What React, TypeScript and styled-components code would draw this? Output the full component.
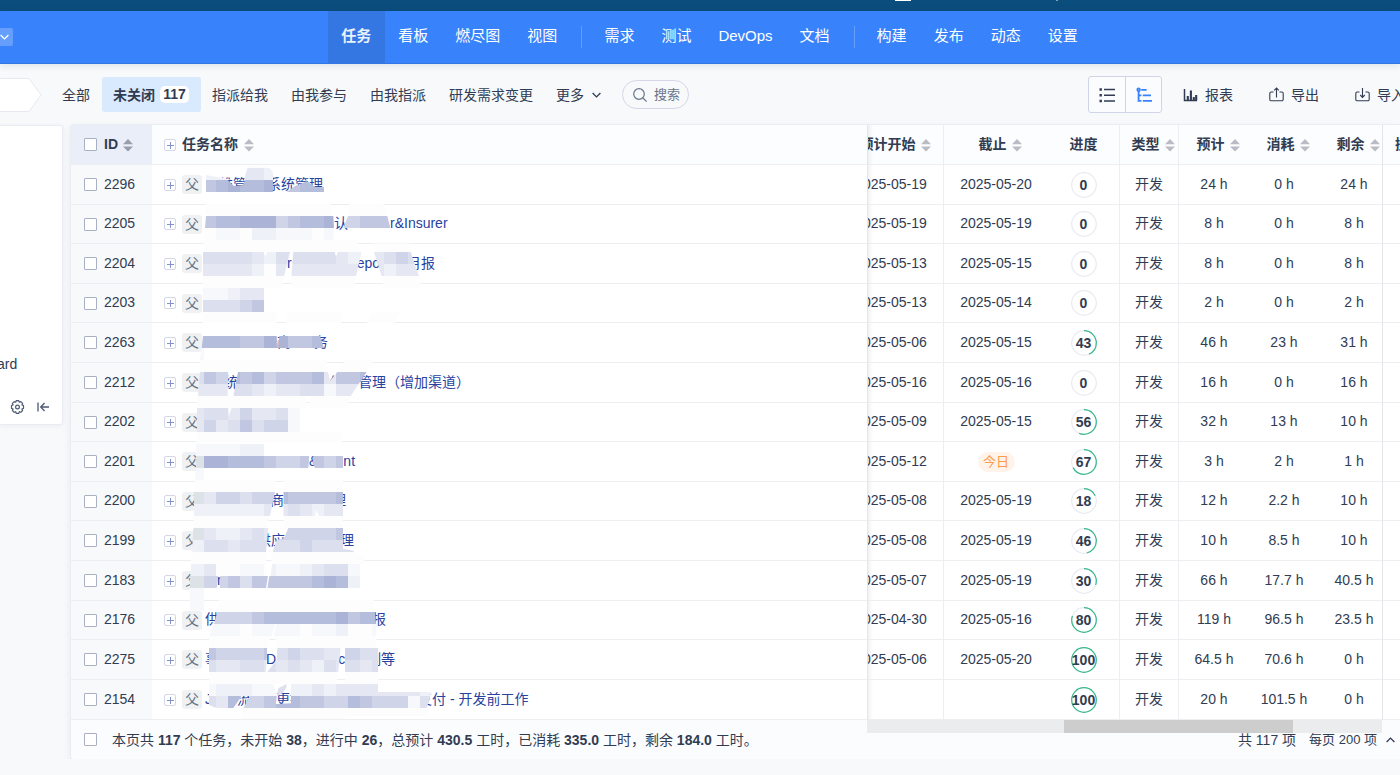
import React from "react";
import styled, { createGlobalStyle, css } from "styled-components";

const GlobalStyle = createGlobalStyle`
  *, *::before, *::after { box-sizing: border-box; }
  body {
    margin: 0;
    background: #f7f9fb;
    color: #313c52;
    font: 14px/20px "Liberation Sans", "Noto Sans CJK SC", sans-serif;
    overflow: hidden;
  }
  button, input { font: inherit; color: inherit; }
  a { color: inherit; text-decoration: none; }
`;

/* ---------- top bars ---------- */

const BrowserStrip = styled.div`
  display: flex;
  justify-content: flex-end;
  gap: 145px;
  height: 11px;
  padding-right: 342px;
  background: #0b4d7c;
`;

const StripMark = styled.i<{ $wide?: boolean }>`
  width: ${(p) => (p.$wide ? 16 : 2)}px;
  height: 1px;
  background: ${(p) => (p.$wide ? "#ffffff" : "#7f9fb6")};
`;

const Header = styled.header`
  display: flex;
  align-items: center;
  height: 53px;
  background: #3883fb;
  border-bottom: 1px solid #3277e4;
  box-shadow: 0 1px 8px rgba(20, 40, 80, 0.12);
  position: relative;
`;

const SwitchButton = styled.button`
  display: flex;
  align-items: center;
  width: 13px;
  height: 18px;
  margin-right: 7px;
  padding: 0;
  border: 0;
  border-radius: 0 2px 2px 0;
  background: #659ffb;
  color: #fff;
`;

const Nav = styled.nav`
  flex: 1;
  display: flex;
  justify-content: center;
  align-self: stretch;
`;

const NavLink = styled.a<{ $active?: boolean }>`
  display: flex;
  align-items: center;
  padding: 0 14px 2px 13px;
  font-size: 15px;
  color: #fff;
  white-space: nowrap;
  ${(p) => p.$active && css`background: #3477e3; font-weight: 700; color: #e9f1fd;`}
`;

const NavDivider = styled.span`
  align-self: center;
  width: 1px;
  height: 22px;
  margin: 0 9px 0 10px;
  background: #659ffb;
`;

/* ---------- toolbar ---------- */

const Toolbar = styled.div`
  display: flex;
  align-items: center;
  height: 61px;
  overflow: hidden;
`;

const Filters = styled.div`
  display: flex;
  align-items: center;
  margin-left: 9px;
`;

const FilterButton = styled.button<{ $active?: boolean; $menu?: boolean }>`
  display: flex;
  align-items: center;
  gap: ${(p) => (p.$menu ? 8 : 5)}px;
  height: 35px;
  padding: 0 12px 0 11px;
  border: 0;
  border-radius: 3px;
  background: ${(p) => (p.$active ? "#d9e9fe" : "transparent")};
  font-weight: ${(p) => (p.$active ? 700 : 400)};
  white-space: nowrap;
`;

const Count = styled.span`
  width: 29px;
  border-radius: 5px;
  background: #fff;
  line-height: 17px;
  text-align: center;
`;

const SearchButton = styled.button`
  display: flex;
  align-items: center;
  gap: 7px;
  height: 29px;
  margin-left: 9px;
  padding: 0 8px 0 10px;
  border: 1px solid #d5d6e8;
  border-radius: 15px;
  background: transparent;
  color: #69758c;
  font-size: 13px;
  white-space: nowrap;
`;

const Actions = styled.div`
  display: flex;
  align-items: center;
  gap: 9px;
  margin: 0 -17px 0 auto;
`;

const ActionList = styled.div`
  display: flex;
  gap: 12px;
`;

const ViewToggle = styled.div`
  display: flex;
  border: 1px solid #d0d4e8;
  border-radius: 3px;
  background: #fbfcfe;
`;

const ToggleButton = styled.button<{ $active?: boolean }>`
  display: grid;
  place-items: center;
  width: 36px;
  height: 35px;
  padding: 0;
  border: 0;
  background: transparent;
  color: ${(p) => (p.$active ? "#3883fb" : "#313c52")};
  & + & { border-left: 1px solid #d0d4e8; }
`;

const ActionButton = styled.button`
  display: flex;
  align-items: center;
  gap: 7px;
  height: 35px;
  padding: 0 12px;
  border: 0;
  background: transparent;
  white-space: nowrap;
`;

/* ---------- body ---------- */

const Content = styled.main`
  display: flex;
  align-items: flex-start;
  gap: 8px;
`;

const SidePanel = styled.aside`
  display: flex;
  flex-direction: column;
  justify-content: flex-end;
  width: 63px;
  height: 300px;
  border: 1px solid #e9ecf1;
  border-left: 0;
  border-radius: 0 3px 3px 0;
  background: #fff;
  box-shadow: 0 1px 5px rgba(30, 50, 80, 0.06);
`;

const SideLink = styled.a`
  margin-bottom: 26px;
  margin-left: -3px;
`;

const SideTools = styled.div`
  display: flex;
  gap: 12px;
  padding: 0 10px 10px;
`;

const IconButton = styled.button`
  display: grid;
  padding: 0;
  border: 0;
  background: transparent;
  color: #4c5a73;
`;

const Panel = styled.section`
  flex: 1;
  min-width: 0;
  position: relative;
  box-shadow: 0 0 0 1px #eaedf1, 0 3px 10px rgba(30, 50, 80, 0.08);
  border-radius: 3px 0 0 3px;
`;

const TaskTable = styled.table`
  width: 100%;
  table-layout: fixed;
  border-spacing: 0;
`;

const HeadRow = styled.tr`
  height: 40px;
`;

const BodyRow = styled.tr`
  height: 40px;
  &:nth-child(5n + 2), &:nth-child(5n + 4) { height: 39px; }
  &:last-child { height: 40px; }
`;

type CellKind = "id" | "name" | "start" | "line" | "plain" | "pinned";

const cellStyle = css<{ $kind: CellKind }>`
  padding: 0;
  border-bottom: 1px solid #eceef1;
  white-space: nowrap;
  vertical-align: middle;
  ${(p) => p.$kind !== "name" && css`overflow: hidden;`}
  ${(p) => p.$kind === "name" && css`position: relative; border-right: 1px solid #e3e5e9;`}
  ${(p) => (p.$kind === "start" || p.$kind === "line") && css`border-right: 1px solid #eceef1;`}
  ${(p) => p.$kind === "pinned" && css`border-left: 1px solid #e3e5e9;`}
`;

const Th = styled.th<{ $kind: CellKind }>`
  ${cellStyle}
  background: ${(p) => (p.$kind === "id" ? "#e9eef8" : "#fcfdfe")};
  font-weight: 700;
  text-align: left;
  ${(p) => p.$kind === "start" && css`background: linear-gradient(to right, #eff0f2, #fcfdfe 5px);`}
`;

const Td = styled.td<{ $kind: CellKind }>`
  ${cellStyle}
  background: ${(p) => (p.$kind === "id" ? "#f7f9fb" : "#ffffff")};
  ${(p) => p.$kind === "start" && css`background: linear-gradient(to right, #f2f2f4, #fff 5px);`}
`;

/* text sits one pixel above the boxes and icons beside it */
const CellText = styled.span`
  padding-bottom: 2px;
`;

const LeftCell = styled.div<{ $gap: number; $pad: number }>`
  display: flex;
  align-items: center;
  gap: ${(p) => p.$gap}px;
  padding-left: ${(p) => p.$pad}px;
`;

const FromRight = styled.div`
  display: flex;
  justify-content: flex-end;
`;

const CenterCell = styled.div<{ $width?: number; $sort?: boolean }>`
  display: flex;
  flex: none;
  align-items: center;
  justify-content: center;
  gap: 5px;
  ${(p) => p.$width && css`width: ${p.$width}px;`}
  padding-left: ${(p) => (p.$sort ? 8 : 0)}px;
`;

const Tick = styled.input.attrs({ type: "checkbox" })`
  appearance: none;
  flex: none;
  width: 13px;
  height: 13px;
  margin: 0;
  border: 1px solid #a9b0c2;
  border-radius: 1px;
  background: #fff;
`;

const TickLabel = styled.label`
  display: flex;
  align-items: center;
  gap: 7px;
`;

const ExpandButton = styled.button`
  display: grid;
  place-items: center;
  width: 12px;
  height: 12px;
  padding: 0;
  border: 1px solid #d4d8e6;
  border-radius: 2px;
  background: #fff;
  color: #8392cb;
`;

const ParentBadge = styled.span`
  width: 20px;
  border-radius: 3px;
  background: #eff1f2;
  color: #64758b;
  line-height: 19px;
  text-align: center;
`;

const TaskLink = styled.a`
  display: flex;
  margin-left: -3px;
  padding-bottom: 2px;
  color: #2842a0;
  white-space: pre;
`;

const Gap = styled.span<{ $width: number }>`
  width: ${(p) => p.$width}px;
`;

const Ring = styled.div`
  display: grid;
  place-items: center;
  height: 26px;
  font-weight: 700;
  & > * { grid-area: 1 / 1; }
`;

const Today = styled.span`
  width: 37px;
  border-radius: 10px;
  background: #fff3ea;
  color: #ff9a4a;
  font-size: 13px;
  text-align: center;
`;

const MosaicSvg = styled.svg`
  position: absolute;
  top: 0;
  left: 0;
  z-index: 1;
  pointer-events: none;
`;

const PanelFooter = styled.footer`
  display: flex;
  align-items: center;
  height: 39px;
  padding: 0 5px 0 13px;
  border-radius: 0 0 0 3px;
  background: #fbfcfe;
  white-space: nowrap;
`;

const Summary = styled.label`
  display: flex;
  align-items: center;
  gap: 15px;
`;

const Pager = styled.div`
  display: flex;
  align-items: center;
  gap: 13px;
  margin-left: auto;
`;

const PageSize = styled.button`
  display: flex;
  align-items: center;
  gap: 9px;
  padding: 0;
  border: 0;
  background: transparent;
  font-size: 13px;
`;

const ScrollTrack = styled.div`
  position: absolute;
  right: 18px;
  bottom: 26px;
  width: 515px;
  height: 13px;
  padding-left: 197px;
  background: #ebecee;
`;

const ScrollThumb = styled.div`
  width: 229px;
  height: 13px;
  background: #cdcdcd;
`;

/* ---------- icons ---------- */

const Chevron = ({ up }: { up?: boolean }) => (
  <svg width="9" height="6" viewBox="0 0 9 6" fill="none" stroke="currentColor" strokeWidth="1.3">
    <path d={up ? "M.6 5 4.5 1.1 8.4 5" : "M.6 1 4.5 4.9 8.4 1"} />
  </svg>
);

const Plus = () => (
  <svg width="8" height="8" viewBox="0 0 8 8" stroke="currentColor" strokeWidth="1">
    <path d="M1 4.5h7M4.5 1v7" />
  </svg>
);

const Sort = ({ dark }: { dark?: boolean }) => (
  <svg width="10" height="14" viewBox="0 0 10 14" fill={dark ? "#989dac" : "#b9bcc4"}>
    <path d="M5 1 10 6.2H0zM5 13.6 0 8.4h10z" />
  </svg>
);

const BreadcrumbEnd = () => (
  <svg width="42" height="34" viewBox="0 0 42 34" fill="#fff" stroke="#e6e9ef">
    <path d="M-1 .5H29L41 17 29 33.5H-1z" />
  </svg>
);

const SearchIcon = () => (
  <svg width="14" height="14" viewBox="0 0 14 14" fill="none" stroke="currentColor" strokeWidth="1.2">
    <circle cx="6" cy="6" r="5.3" />
    <path d="m10 10 3.6 3.6" />
  </svg>
);

const ListIcon = () => (
  <svg width="16" height="16" viewBox="0 0 16 16" stroke="currentColor" strokeWidth="1.5">
    <path d="M5 2.5h11M5 8.2h11M5 14h11" />
    <path d="M.5 2.5h2.4M.5 8.2h2.4M.5 14h2.4" strokeWidth="2.4" />
  </svg>
);

const TreeIcon = () => (
  <svg width="16" height="16" viewBox="0 0 16 16" fill="none" stroke="currentColor" strokeWidth="1.8">
    <circle cx="2.6" cy="2.8" r="1.3" />
    <path d="M5.2 2.8h5.4M2.6 4v9.8h2.8M2.6 8.4h2.8M6.8 8.4H15M6.8 13.8H16" />
  </svg>
);

const ChartIcon = () => (
  <svg width="15" height="14" viewBox="0 0 15 14" stroke="currentColor" fill="none">
    <path d="M1.5 1v11.5H14" strokeWidth="1.5" />
    <path d="M4.8 12.5V8M7.9 12.5V2.6M10.8 12.5V9M13.2 12.5V7" strokeWidth="2.1" />
  </svg>
);

const TransferIcon = ({ into }: { into?: boolean }) => (
  <svg width="15" height="15" viewBox="0 0 15 15" fill="none" stroke="currentColor" strokeWidth="1.1">
    <path d="M4.5 5H2.2A1.4 1.4 0 0 0 .8 6.4v6a1.4 1.4 0 0 0 1.4 1.4h10.6a1.4 1.4 0 0 0 1.4-1.4v-6A1.4 1.4 0 0 0 12.8 5h-2.3" />
    <path d={into ? "M7.5 1v9.4M5.2 8l2.3 2.4L9.8 8" : "M7.5 10.4V1M5.2 3.4 7.5 1l2.3 2.4"} />
  </svg>
);

const GearIcon = () => (
  <svg width="15" height="14" viewBox="0 0 15 14" fill="none" stroke="currentColor" strokeWidth="1.2" strokeLinejoin="round">
    <path d="M6.2.7h2.6l.5 1.5 1.5-.6 1.8 1.8-.7 1.5 1.6.6v2.9l-1.6.6.7 1.5-1.8 1.8-1.5-.6-.5 1.6H6.2l-.5-1.6-1.5.6-1.8-1.8.7-1.5L1.500 8.400V5.500l1.600-.6-.7-1.500 1.800-1.800 1.500.6z" />
    <circle cx="7.5" cy="7" r="1.9" />
  </svg>
);

const CollapseIcon = () => (
  <svg width="13" height="14" viewBox="0 0 13 14" fill="none" stroke="currentColor" strokeWidth="1.3">
    <path d="M1 2.500v9M12 7H4M7.6 3 3.7 7l3.9 4" />
  </svg>
);

const Progress = ({ value }: { value: number }) => {
  const length = 2 * Math.PI * 12.3;
  return (
    <Ring>
      <svg width="26" height="26" viewBox="0 0 26 26" fill="none" strokeWidth="1.2">
        <circle cx="13" cy="13" r="12.3" stroke="#e9eaf2" />
        {value > 0 && (
          <circle
            cx="13"
            cy="13"
            r="12.3"
            stroke="#35b98a"
            strokeDasharray={`${(length * value) / 100} ${length}`}
            transform="rotate(-90 13 13)"
          />
        )}
      </svg>
      <span>{value}</span>
    </Ring>
  );
};

/* ---------- mosaic laid over the private parts of the task names ---------- */

const TONES: Record<string, string> = {
  a: "#abb4d7",
  b: "#b5bddc",
  c: "#c1c6e1",
  d: "#cfd4e8",
  e: "#dcdfed",
  f: "#e5e8f3",
  g: "#eff1f8",
  h: "#f7f8fc",
  w: "#fdfdfd",
  k: "#dde2e6",
};

/* outline, then strips of 36-unit cells: [top, left, tones] */
type Blob = [string, ...[number, number, string][]];

const MOSAIC: { top: number; blobs: Blob[] }[] = [
  {
    top: 480,
    blobs: [
      ["438,60 504,60 522,78 548,76 556,60 639,60 639,96 438,96", [60, 432, "cbabba"]],
      ["552,60 562,24 628,24 639,36 639,60", [24, 540, "ffg"]],
      ["562,24 580,8 615,8 628,24", [-12, 540, "www"]],
      ["438,45 520,60 438,60", [24, 432, "ggg"]],
      ["680,96 705,78 740,64 765,80 792,82 792,96", [60, 648, "ccbbb"]],
      ["438,132 810,132 820,168 438,168", [132, 432, "wwwwwwwwwww"]],
      ["870,132 970,132 982,168 860,168", [132, 828, "wwwww"]],
      ["438,168 820,168 822,204 820,240 432,240", [168, 432, "cbbaaadcbba"], [204, 432, "whhwgghhhwh"]],
      ["850,204 864,168 982,168 991,204", [168, 828, "ddccc"]],
      ["432,240 890,240 905,276 432,276", [240, 432, "wwwwwwwwwwwwww"]],
      ["940,250 1048,250 1055,276 945,276", [240, 936, "wwww"]],
      ["429,276 612,276 615,290 622,276 690,276 672,348 429,348", [276, 396, "eeeeefgee"], [312, 396, "fffffgwff"]],
      ["700,276 824,276 828,290 834,276 905,276 888,348 694,348", [276, 684, "eeeefgg"], [312, 684, "fffffff"]],
      ["942,276 1052,276 1077,348 965,348", [276, 936, "fede"], [312, 936, "fgff"]],
      ["429,348 675,348 665,384 429,384", [348, 396, "wwwwwwww"]],
      ["694,348 885,348 880,384 694,384", [348, 684, "wwwwww"]],
      ["968,348 1080,348 1082,384 970,384", [348, 936, "wwwww"]],
      ["429,384 612,384 612,456 429,456", [384, 396, "hhhgff"], [420, 396, "eeeedc"]],
      ["429,456 650,456 650,490 429,490", [456, 396, "wwwwwwww"]],
      ["685,456 850,456 843,490 675,490", [456, 648, "wwwwwww"]],
      ["935,456 1020,456 1005,490 920,490", [456, 900, "wwww"]],
      ["429,528 650,528 655,564 425,564", [528, 396, "bbbbccab"]],
      ["655,564 658,528 780,528 792,564", [528, 648, "accbb"]],
      ["424,564 432,564 432,600 420,600", [564, 396, "hh"]],
    ],
  },
  {
    top: 1080,
    blobs: [
      ["420,0 800,0 804,36 420,36", [0, 396, "wwwwwwwwwwww"]],
      ["858,0 940,0 920,36 832,36", [0, 828, "wwww"]],
      ["420,36 505,36 503,108 414,108", [36, 396, "ecdd"], [72, 396, "ffff"]],
      ["534,36 804,36 810,62 832,36 920,36 872,108 520,108", [36, 504, "bcbdcccbfccb"], [72, 504, "eefgffeehff"]],
      ["411,108 516,108 506,144 411,144", [108, 396, "wwww"]],
      ["518,108 740,108 736,144 508,144", [108, 504, "wwwwwww"]],
      ["750,108 870,108 858,144 746,144", [108, 720, "wwwww"]],
      ["411,144 505,144 506,168 515,144 720,144 720,216 411,216", [144, 396, "feefdffeh"], [180, 396, "fdfeceddh"]],
      ["411,216 848,216 848,250 408,250", [216, 396, "wwwwwwwwwwwww"]],
      ["408,252 612,252 612,288 408,288", [252, 396, "hhhhgg"]],
      ["408,288 748,288 745,324 408,324", [288, 396, "kaabbbcddc"]],
      ["760,288 849,288 849,324 765,324 757,310", [288, 756, "cdc"]],
      ["408,324 432,324 432,360 405,360", [324, 396, "hh"]],
      ["405,360 648,360 645,396 402,396", [360, 396, "wwwwwww"]],
      ["670,360 849,360 849,396 670,396", [360, 648, "wwwwww"]],
      ["402,396 645,396 630,468 402,468", [396, 396, "kfddedd"], [432, 396, "ggggggf"]],
      ["670,396 849,396 849,468 778,468 768,450 765,468 670,468", [396, 648, "bccccb"], [432, 648, "fefgff"]],
      ["400,468 628,468 622,504 400,504", [468, 396, "wwwwwww"]],
      ["672,468 849,468 849,504 672,504", [468, 648, "wwwwww"]],
      ["400,504 625,504 618,576 396,576", [504, 396, "kfggfef"], [540, 396, "geefeee"]],
      ["685,504 849,504 849,576 638,576 650,540 672,535", [504, 648, "dddddc"], [540, 612, "eeedeee"]],
      ["849,566 880,572 882,576 849,576", [540, 828, "ee"]],
    ],
  },
  {
    top: 1650,
    blobs: [
      ["393,6 618,6 618,42 393,42", [6, 360, "wwwwwwww"]],
      ["640,6 880,6 914,20 914,42 632,42", [6, 612, "wwwwwwwww"]],
      ["393,42 620,42 620,78 393,78", [42, 360, "ggfwwhhw"]],
      ["636,42 900,42 900,78 632,78", [42, 612, "ghhgfeeh"]],
      ["390,78 475,78 470,114 390,114", [78, 360, "kkdd"]],
      ["480,78 624,78 618,114 480,114", [78, 468, "dceccc"]],
      ["628,78 900,78 900,114 622,114", [78, 612, "ccccbabg"]],
      ["390,114 432,114 432,182 390,182", [114, 360, "hhh"], [150, 360, "hhh"]],
      ["478,150 940,150 945,186 470,186", [150, 468, "wwwwwwwwwwwwww"]],
      ["472,186 945,186 948,222 462,222", [186, 432, "ddddcbbbbbbacbb"]],
      ["462,222 646,222 635,258 447,258", [222, 432, "hhhwhhh"]],
      ["648,222 950,222 950,258 642,258", [222, 612, "hhhwhhgwwh"]],
      ["447,258 632,258 622,294 447,294", [258, 432, "wwwwwwww"]],
      ["645,258 950,258 950,294 652,294", [258, 612, "wwwwwwwwww"]],
      ["447,294 622,294 618,366 447,366", [294, 432, "cddddce"], [330, 432, "effeefff"]],
      ["652,294 842,294 835,366 622,366 650,330", [294, 612, "eedeeff"], [330, 612, "efefgef"]],
      ["855,294 954,294 954,366 855,366", [294, 828, "ddee"], [330, 828, "eefe"]],
      ["447,366 832,366 830,402 447,402", [366, 432, "wwwwwwwwwwww"]],
      ["855,366 954,366 954,402 855,402", [366, 828, "wwww"]],
      ["447,402 640,402 650,438 447,438", [402, 432, "hggghhh"]],
      ["650,438 655,415 680,402 680,410 668,430", [402, 648, "e"]],
      ["693,402 954,402 954,438 693,438", [402, 684, "ggfgffff"]],
      ["447,438 545,438 520,474 470,474 447,465", [438, 432, "efbc"]],
      ["570,438 650,438 648,462 693,460 693,474 550,474", [438, 540, "ddcbb"]],
      ["954,426 1114,426 1112,438 954,438", [426, 936, "ffffgf"]],
      ["693,438 1112,438 1100,474 693,474", [438, 684, "bccddbcdddhe"]],
      ["470,474 540,474 520,484 490,484", [474, 468, "ww"]],
      ["550,474 1100,474 1105,498 855,498 855,508 545,508", [474, 540, "wwwwwwwwwwwwwwww"]],
    ],
  },
];

const Mosaic = () => (
  <MosaicSvg width="400" height="560" viewBox="276 495 1200 1680" shapeRendering="crispEdges" aria-hidden>
    {MOSAIC.map((group, g) => (
      <g key={g} transform={`translate(0 ${group.top})`}>
        {group.blobs.map(([outline, ...strips], b) => (
          <g key={b}>
            <clipPath id={`blob-${g}-${b}`}>
              <polygon points={outline} />
            </clipPath>
            <g clipPath={`url(#blob-${g}-${b})`}>
              {strips.map(([top, left, tones]) =>
                tones.split("").map((tone, i) => (
                  <rect key={`${top}-${i}`} x={left + i * 36} y={top} width="36" height="36" fill={TONES[tone]} />
                )),
              )}
            </g>
          </g>
        ))}
      </g>
    ))}
  </MosaicSvg>
);

/* ---------- data ---------- */

type Task = {
  id: number;
  /* readable pieces of the name, with the widths of the hidden stretches */
  name: (string | number)[];
  start: string;
  due: string;
  progress: number;
  est: string;
  used: string;
  left: string;
};

const task = (
  id: number,
  name: (string | number)[],
  start: string,
  due: string,
  progress: number,
  est: string,
  used: string,
  left: string,
): Task => ({ id, name, start, due, progress, est, used, left });

const TASKS: Task[] = [
  task(2296, [14, "维管", 20, "系统管理"], "2025-05-19", "2025-05-20", 0, "24", "0", "24"),
  task(2205, [129, "认", 42, "r&Insurer"], "2025-05-19", "2025-05-19", 0, "8", "0", "8"),
  task(2204, [82, "r", 65, "epo", 27, "月报"], "2025-05-13", "2025-05-15", 0, "8", "0", "8"),
  task(2203, [], "2025-05-13", "2025-05-14", 0, "2", "0", "2"),
  task(2263, [72, "商", 23, "务"], "2025-05-06", "2025-05-15", 43, "46", "23", "31"),
  task(2212, [19, "统管", 77, "作", 15, "管理（增加渠道）"], "2025-05-16", "2025-05-16", 0, "16", "0", "16"),
  task(2202, [], "2025-05-09", "2025-05-15", 56, "32", "13", "10"),
  task(2201, [104, "&", 25, "nt"], "2025-05-12", "今日", 67, "3", "2", "1"),
  task(2200, [65, "商", 48, "理"], "2025-05-08", "2025-05-19", 18, "12", "2.2", "10"),
  task(2199, [52, "供应", 55, "理"], "2025-05-08", "2025-05-19", 46, "10", "8.5", "10"),
  task(2183, [12, "r"], "2025-05-07", "2025-05-19", 30, "66", "17.7", "40.5"),
  task(2176, ["供", 153, "报"], "2025-04-30", "2025-05-16", 80, "119", "96.5", "23.5"),
  task(2275, ["事", 47, "D", 62, "c", 22, "划等"], "2025-05-06", "2025-05-20", 100, "64.5", "70.6", "0"),
  task(2154, ["J", 25, "流", 25, "更接", 114, "支付 - 开发前工作"], "", "", 100, "20", "101.5", "0"),
];

const NAV: string[][] = [
  ["任务", "看板", "燃尽图", "视图"],
  ["需求", "测试", "DevOps", "文档"],
  ["构建", "发布", "动态", "设置"],
];

const TaskRow = ({ item, first }: { item: Task; first: boolean }) => (
  <BodyRow>
    <Td $kind="id">
      <LeftCell as={TickLabel} $gap={7} $pad={13}>
        <Tick />
        <CellText>{item.id}</CellText>
      </LeftCell>
    </Td>
    <Td $kind="name">
      <LeftCell $gap={6} $pad={12}>
        <ExpandButton aria-label="展开"><Plus /></ExpandButton>
        <ParentBadge>父</ParentBadge>
        <TaskLink href="#">
          {item.name.map((part, i) =>
            typeof part === "number" ? <Gap key={i} $width={part} /> : <span key={i}>{part}</span>,
          )}
        </TaskLink>
      </LeftCell>
      {first && <Mosaic />}
    </Td>
    <Td $kind="start">
      <FromRight><CenterCell $width={104}><CellText>{item.start}</CellText></CenterCell></FromRight>
    </Td>
    <Td $kind="plain">
      <CenterCell>{item.due === "今日" ? <Today>今日</Today> : <CellText>{item.due}</CellText>}</CenterCell>
    </Td>
    <Td $kind="line"><Progress value={item.progress} /></Td>
    <Td $kind="line"><CenterCell><CellText>开发</CellText></CenterCell></Td>
    <Td $kind="plain"><CenterCell><CellText>{item.est} h</CellText></CenterCell></Td>
    <Td $kind="plain"><CenterCell><CellText>{item.used} h</CellText></CenterCell></Td>
    <Td $kind="plain"><CenterCell $width={70}><CellText>{item.left} h</CellText></CenterCell></Td>
    <Td $kind="pinned" />
  </BodyRow>
);

const SortHead = ({ label, width }: { label: string; width?: number }) => (
  <CenterCell $width={width} $sort>
    <CellText>{label}</CellText>
    <Sort />
  </CenterCell>
);

export default function App() {
  return (
    <>
      <GlobalStyle />
      <BrowserStrip>
        <StripMark $wide />
        <StripMark />
      </BrowserStrip>
      <Header>
        <SwitchButton aria-label="切换"><Chevron /></SwitchButton>
        <Nav>
          {NAV.map((group, g) => (
            <React.Fragment key={g}>
              {g > 0 && <NavDivider />}
              {group.map((label) => (
                <NavLink key={label} href="#" $active={label === "任务"}>{label}</NavLink>
              ))}
            </React.Fragment>
          ))}
        </Nav>
      </Header>

      <Toolbar>
        <BreadcrumbEnd />
        <Filters>
          <FilterButton>全部</FilterButton>
          <FilterButton $active>未关闭<Count>117</Count></FilterButton>
          <FilterButton>指派给我</FilterButton>
          <FilterButton>由我参与</FilterButton>
          <FilterButton>由我指派</FilterButton>
          <FilterButton>研发需求变更</FilterButton>
          <FilterButton $menu>更多<Chevron /></FilterButton>
          <SearchButton><SearchIcon />搜索</SearchButton>
        </Filters>
        <Actions>
          <ViewToggle>
            <ToggleButton aria-label="列表"><ListIcon /></ToggleButton>
            <ToggleButton aria-label="树状" $active><TreeIcon /></ToggleButton>
          </ViewToggle>
          <ActionList>
            <ActionButton><ChartIcon />报表</ActionButton>
            <ActionButton><TransferIcon />导出</ActionButton>
            <ActionButton><TransferIcon into />导入</ActionButton>
          </ActionList>
        </Actions>
      </Toolbar>

      <Content>
        <SidePanel>
          <SideLink href="#">ard</SideLink>
          <SideTools>
            <IconButton aria-label="设置"><GearIcon /></IconButton>
            <IconButton aria-label="收起"><CollapseIcon /></IconButton>
          </SideTools>
        </SidePanel>

        <Panel>
          <TaskTable>
            <colgroup>
              <col width="81" />
              <col />
              <col width="76" />
              <col width="104" />
              <col width="72" />
              <col width="59" />
              <col width="70" />
              <col width="70" />
              <col width="63" />
              <col width="18" />
            </colgroup>
            <thead>
              <HeadRow>
                <Th $kind="id">
                  <LeftCell $gap={5} $pad={13}>
                    <TickLabel><Tick /><CellText>ID</CellText></TickLabel>
                    <Sort dark />
                  </LeftCell>
                </Th>
                <Th $kind="name">
                  <LeftCell $gap={6} $pad={12}>
                    <ExpandButton aria-label="全部展开"><Plus /></ExpandButton>
                    <CellText>任务名称</CellText>
                    <Sort />
                  </LeftCell>
                </Th>
                <Th $kind="start">
                  <FromRight><SortHead label="预计开始" width={104} /></FromRight>
                </Th>
                <Th $kind="plain"><SortHead label="截止" /></Th>
                <Th $kind="line"><CenterCell><CellText>进度</CellText></CenterCell></Th>
                <Th $kind="line"><SortHead label="类型" /></Th>
                <Th $kind="plain"><SortHead label="预计" /></Th>
                <Th $kind="plain"><SortHead label="消耗" /></Th>
                <Th $kind="plain"><SortHead label="剩余" width={70} /></Th>
                <Th $kind="pinned"><LeftCell $gap={0} $pad={12}><CellText>操作</CellText></LeftCell></Th>
              </HeadRow>
            </thead>
            <tbody>
              {TASKS.map((item, i) => <TaskRow key={item.id} item={item} first={i === 0} />)}
            </tbody>
          </TaskTable>
          <PanelFooter>
            <Summary>
              <Tick />
              <span>
                本页共 <b>117</b> 个任务，未开始 <b>38</b>，进行中 <b>26</b>，总预计 <b>430.5</b> 工时，已消耗 <b>335.0</b> 工时，剩余 <b>184.0</b> 工时。
              </span>
            </Summary>
            <Pager>
              <span>共 117 项</span>
              <PageSize>每页 200 项<Chevron up /></PageSize>
            </Pager>
          </PanelFooter>
          <ScrollTrack><ScrollThumb /></ScrollTrack>
        </Panel>
      </Content>
    </>
  );
}
